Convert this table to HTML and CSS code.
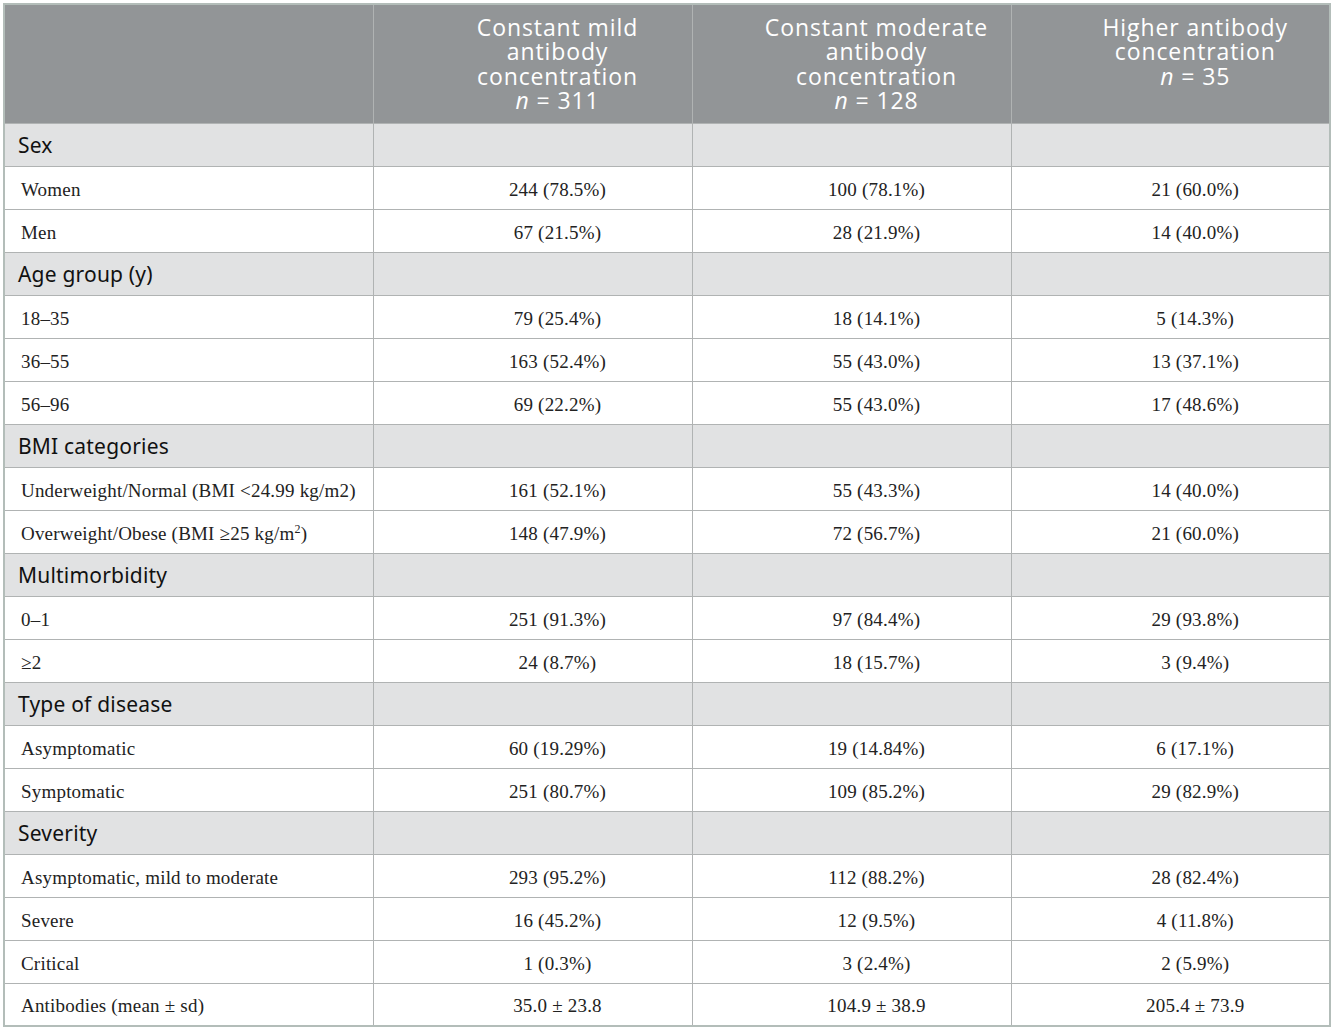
FILE: index.html
```html
<!DOCTYPE html>
<html>
<head>
<meta charset="utf-8">
<title>Antibody concentration groups</title>
<link rel="stylesheet" href="styles.css">
</head>
<body>
<div class="wrap">
<table class="data">
	<colgroup>
		<col class="c_label">
		<col class="c_val">
		<col class="c_val">
		<col class="c_val">
	</colgroup>
	<thead>
		<tr>
			<th></th>
			<th>Constant mild<br>antibody<br>concentration<br><i>n</i> = 311</th>
			<th>Constant moderate<br>antibody<br>concentration<br><i>n</i> = 128</th>
			<th>Higher antibody<br>concentration<br><i>n</i> = 35</th>
		</tr>
	</thead>
	<tbody>
		<tr class="sec"><td>Sex</td><td></td><td></td><td></td></tr>
		<tr><td>Women</td><td>244 (78.5%)</td><td>100 (78.1%)</td><td>21 (60.0%)</td></tr>
		<tr><td>Men</td><td>67 (21.5%)</td><td>28 (21.9%)</td><td>14 (40.0%)</td></tr>
		<tr class="sec"><td>Age group (y)</td><td></td><td></td><td></td></tr>
		<tr><td>18–35</td><td>79 (25.4%)</td><td>18 (14.1%)</td><td>5 (14.3%)</td></tr>
		<tr><td>36–55</td><td>163 (52.4%)</td><td>55 (43.0%)</td><td>13 (37.1%)</td></tr>
		<tr><td>56–96</td><td>69 (22.2%)</td><td>55 (43.0%)</td><td>17 (48.6%)</td></tr>
		<tr class="sec"><td>BMI categories</td><td></td><td></td><td></td></tr>
		<tr><td>Underweight/Normal (BMI &lt;24.99 kg/m2)</td><td>161 (52.1%)</td><td>55 (43.3%)</td><td>14 (40.0%)</td></tr>
		<tr><td>Overweight/Obese (BMI ≥25 kg/m<sup>2</sup>)</td><td>148 (47.9%)</td><td>72 (56.7%)</td><td>21 (60.0%)</td></tr>
		<tr class="sec"><td>Multimorbidity</td><td></td><td></td><td></td></tr>
		<tr><td>0–1</td><td>251 (91.3%)</td><td>97 (84.4%)</td><td>29 (93.8%)</td></tr>
		<tr><td>≥2</td><td>24 (8.7%)</td><td>18 (15.7%)</td><td>3 (9.4%)</td></tr>
		<tr class="sec"><td>Type of disease</td><td></td><td></td><td></td></tr>
		<tr><td>Asymptomatic</td><td>60 (19.29%)</td><td>19 (14.84%)</td><td>6 (17.1%)</td></tr>
		<tr><td>Symptomatic</td><td>251 (80.7%)</td><td>109 (85.2%)</td><td>29 (82.9%)</td></tr>
		<tr class="sec"><td>Severity</td><td></td><td></td><td></td></tr>
		<tr><td>Asymptomatic, mild to moderate</td><td>293 (95.2%)</td><td>112 (88.2%)</td><td>28 (82.4%)</td></tr>
		<tr><td>Severe</td><td>16 (45.2%)</td><td>12 (9.5%)</td><td>4 (11.8%)</td></tr>
		<tr><td>Critical</td><td>1 (0.3%)</td><td>3 (2.4%)</td><td>2 (5.9%)</td></tr>
		<tr><td>Antibodies (mean ± sd)</td><td>35.0 ± 23.8</td><td>104.9 ± 38.9</td><td>205.4 ± 73.9</td></tr>
	</tbody>
</table>
</div>
</body>
</html>
```

FILE: styles.css
```css
html, body {
	margin: 0;
	padding: 0;
	background: #fff;
}

.wrap {
	padding: 3px 0 0 3px;
}

.data {
	border-collapse: collapse;
	table-layout: fixed;
	width: 1325px;
	border: 2px solid #b3bdb9;
	font-family: "Liberation Serif", "Times New Roman", serif;
	font-size: 19px;
	letter-spacing: 0.2px;
	color: #222;
}

.c_label {
	width: 369px;
}

.c_val {
	width: 319px;
}

.data th, .data td {
	border: 1px solid #b0b3b3;
	padding: 0;
}

/* header */
.data thead th {
	height: 119px;
	background: #929597;
	color: #fff;
	font-family: "Open Sans", "DejaVu Sans", sans-serif;
	font-weight: normal;
	font-size: 23px;
	letter-spacing: 0.9px;
	line-height: 24.4px;
	vertical-align: top;
	text-align: center;
	padding: 10px 4px 0 54px;
	box-sizing: border-box;
}

/* body */
.data td {
	height: 43px;
	text-align: center;
	vertical-align: middle;
	padding: 4px 4px 0 54px;
	box-sizing: border-box;
}

.data td:first-child {
	text-align: left;
	padding: 4px 0 0 16px;
}

.data tr.sec td {
	background: #e1e2e3;
	font-family: "Noto Sans", "Open Sans", sans-serif;
	font-size: 21px;
	letter-spacing: 0.2px;
	color: #111;
	padding-top: 0;
}

.data tr.sec td:first-child {
	padding-left: 13px;
}

.data sup {
	font-size: 12px;
	line-height: 0;
}
```
